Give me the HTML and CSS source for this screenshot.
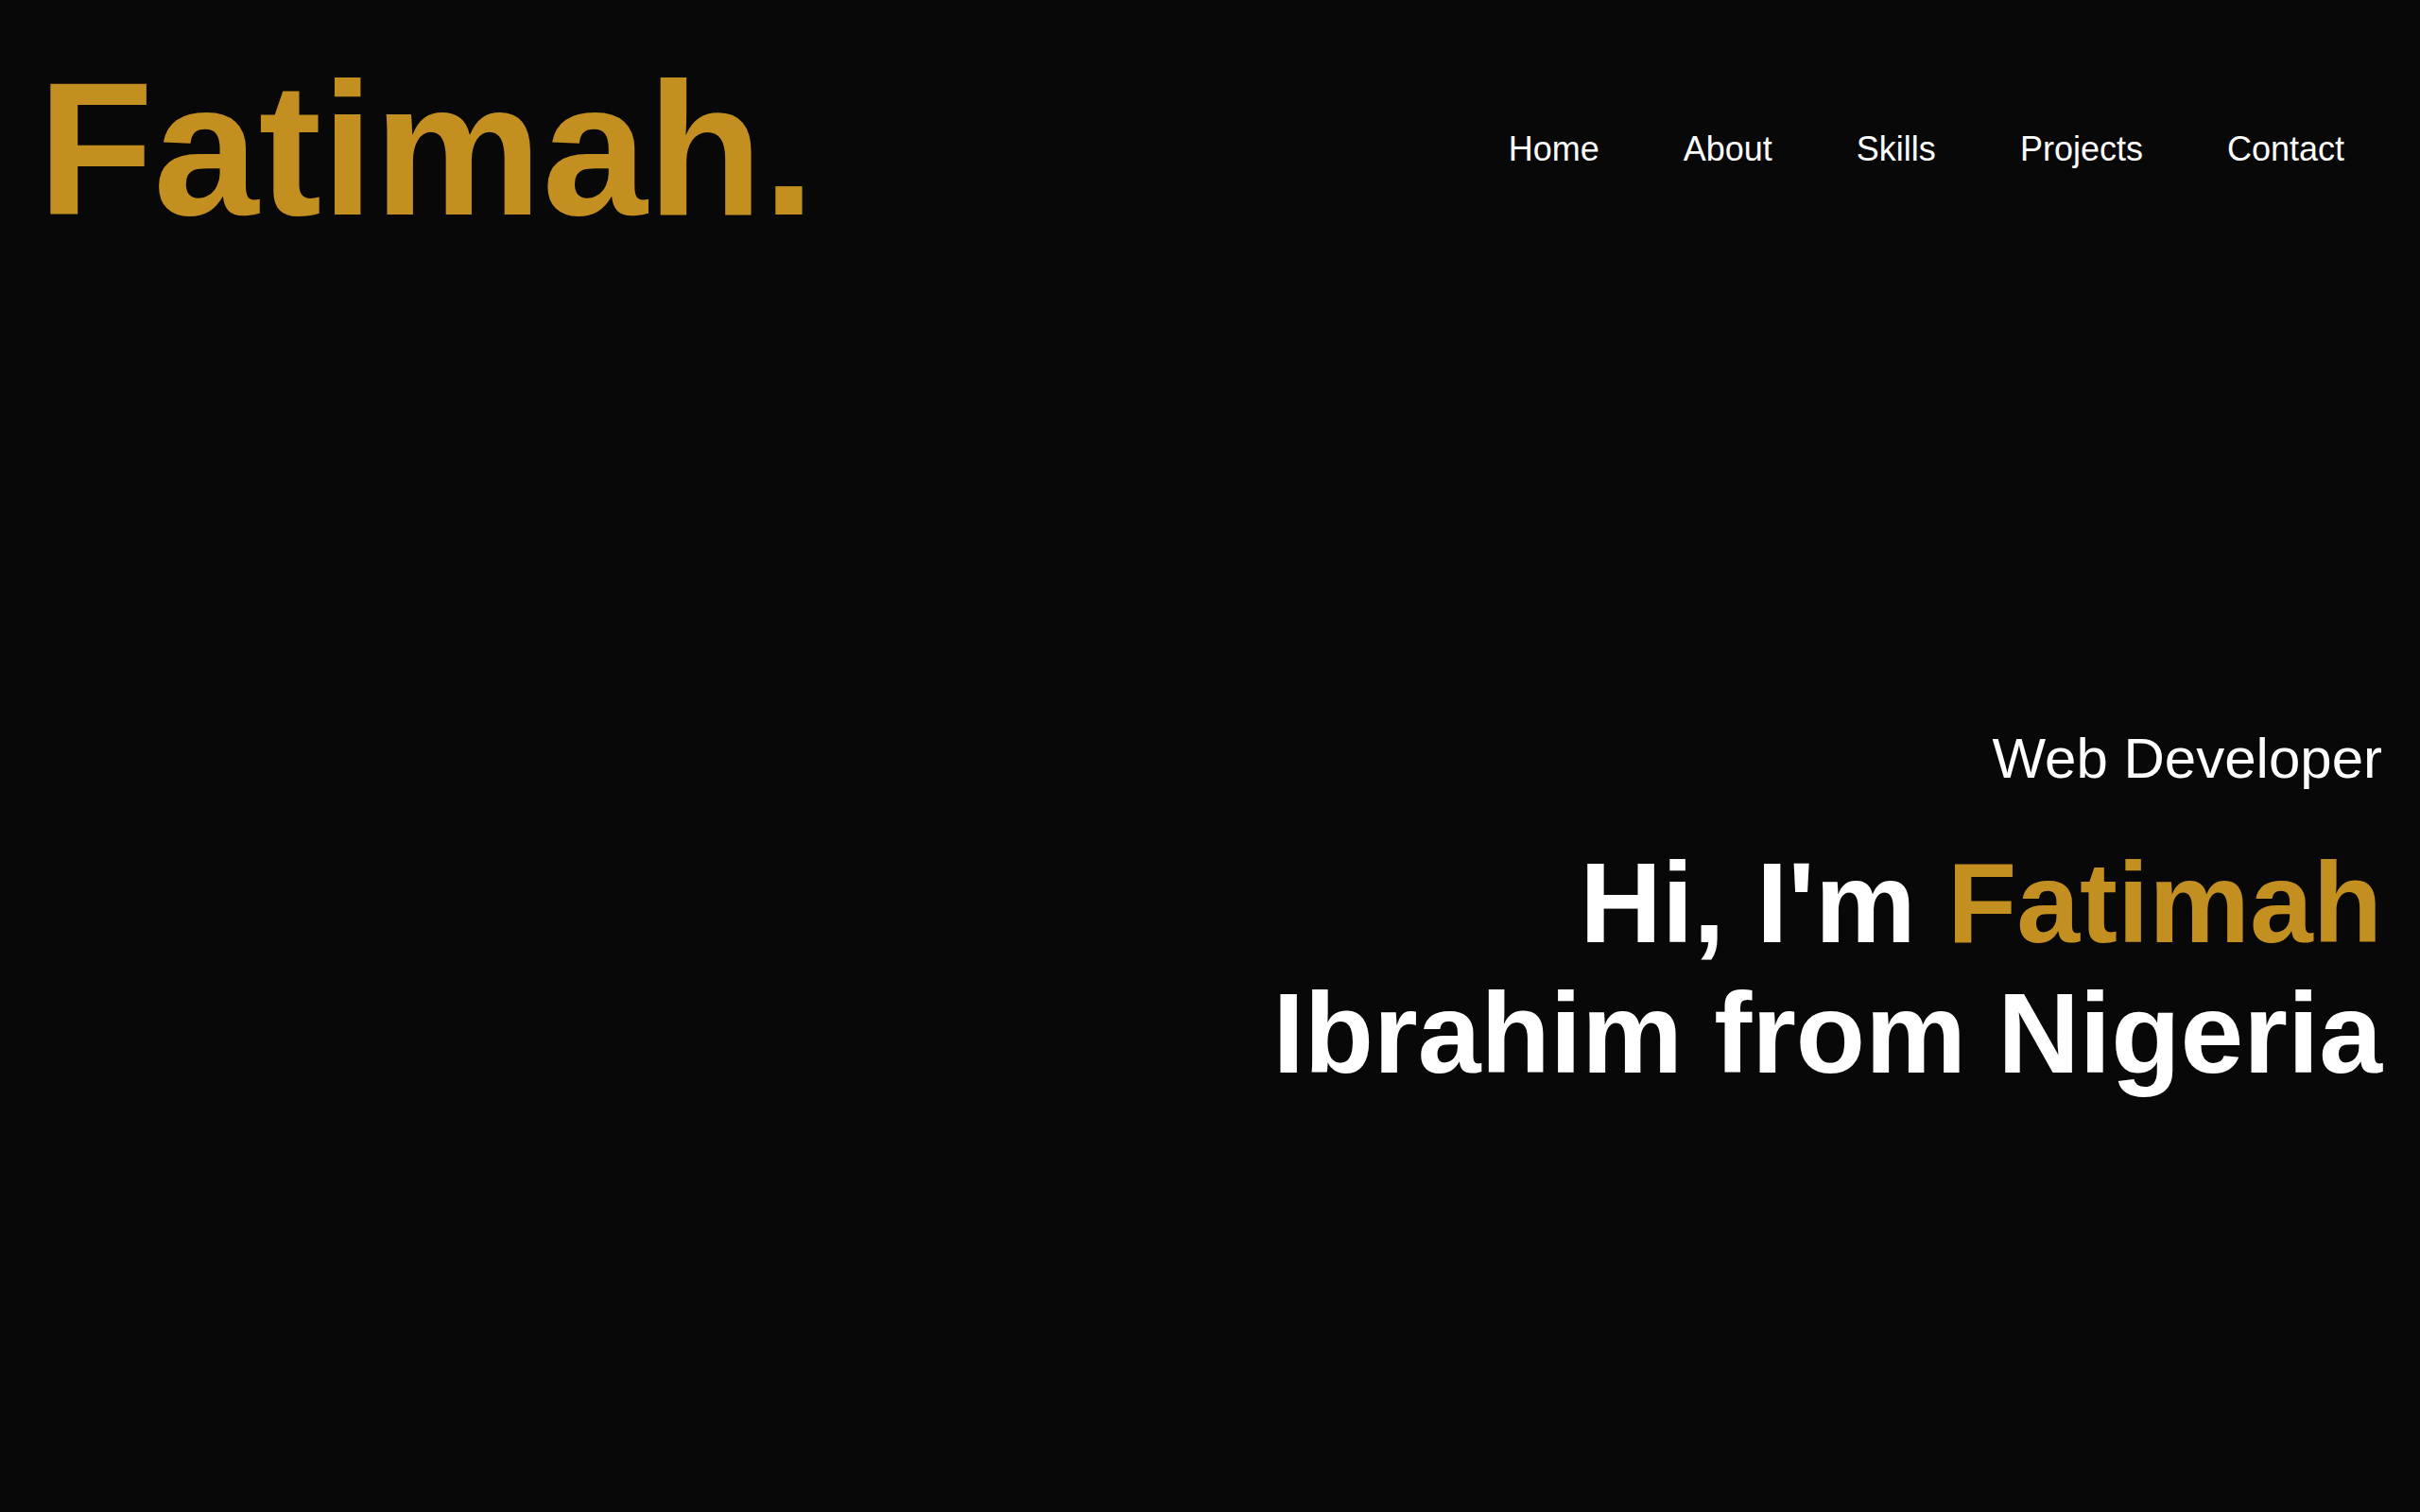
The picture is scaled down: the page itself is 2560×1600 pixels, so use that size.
FILE: index.html
```html
<!DOCTYPE html>
<html lang="en">
<head>
<meta charset="utf-8">
<title>Fatimah</title>
<link rel="stylesheet" href="styles.css">
</head>
<body>
<header class="site-header">
  <div class="logo">Fatimah.</div>
  <nav class="nav">
    <a class="nav-link" href="#">Home</a>
    <a class="nav-link" href="#">About</a>
    <a class="nav-link" href="#">Skills</a>
    <a class="nav-link" href="#">Projects</a>
    <a class="nav-link" href="#">Contact</a>
  </nav>
</header>
<main class="hero">
  <p class="role">Web Developer</p>
  <h1 class="headline">Hi, I'm <span class="accent">Fatimah</span><br>Ibrahim from Nigeria</h1>
</main>
</body>
</html>
```
FILE: styles.css
```css
html, body {
  margin: 0;
  padding: 0;
}
body {
  background: #080808;
  color: #ffffff;
  font-family: "Liberation Sans", Arial, Helvetica, sans-serif;
  min-height: 100vh;
}
.site-header {
  display: flex;
  justify-content: space-between;
  align-items: center;
  padding: 43px 80px 0 40px;
}
.logo {
  font-size: 200px;
  font-weight: 700;
  color: #c38f20;
  line-height: normal;
}
.nav {
  display: flex;
  gap: 89px;
}
.nav-link {
  color: #ffffff;
  text-decoration: none;
  font-size: 36px;
  line-height: normal;
}
.hero {
  display: flex;
  flex-direction: column;
  align-items: flex-end;
  text-align: right;
  padding: 0 40px;
  margin-top: 495px;
}
.role {
  margin: 0 0 49px;
  font-size: 60px;
  line-height: normal;
  font-weight: 400;
}
.headline {
  margin: 0;
  font-size: 120px;
  font-weight: 700;
  line-height: normal;
}
.accent {
  color: #c38f20;
}
```
